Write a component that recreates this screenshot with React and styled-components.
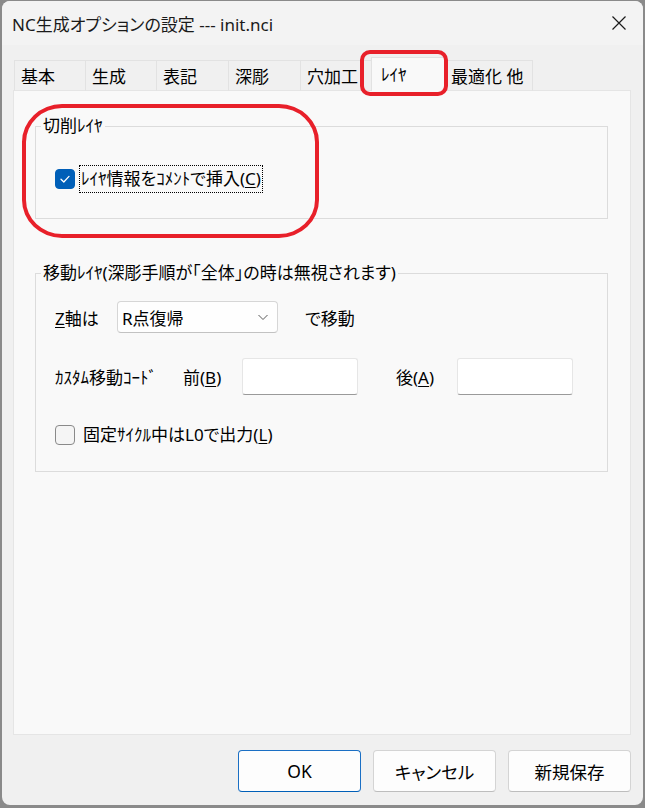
import React from 'react';
import styled, { createGlobalStyle } from 'styled-components';

const GlobalStyle = createGlobalStyle`
  html, body {
    margin: 0;
    padding: 0;
  }
  body {
    background: #8a8a8a;
    font-family: "Noto Sans", "Noto Sans CJK JP", sans-serif;
    font-feature-settings: "palt";
    font-size: 17px;
    color: #000;
  }
`;

const Window = styled.div`
  position: relative;
  box-sizing: border-box;
  margin: 1px 2px 0 2px;
  width: 641px;
  height: 804px;
  border-radius: 8px;
  background: #f0f0f0;
  overflow: hidden;
  display: flex;
  flex-direction: column;
`;

const TitleBar = styled.div`
  height: 44px;
  flex: none;
  display: flex;
  align-items: center;
  justify-content: space-between;
  padding-left: 10px;
  background: #f3f3f3;
`;

const Title = styled.div`
  font-size: 17px;
  color: #1a1a1a;
`;

const CloseButton = styled.div`
  width: 48px;
  height: 44px;
  display: flex;
  align-items: center;
  justify-content: center;
`;

const Body = styled.div`
  flex: 1;
  display: flex;
  flex-direction: column;
  padding: 12px 12px 0 11px;
  min-height: 0;
`;

const TabRow = styled.div`
  position: relative;
  z-index: 1;
  height: 34px;
  margin-bottom: -1px;
  padding-left: 1px;
  display: flex;
  align-items: flex-end;
`;

const Tab = styled.div`
  box-sizing: border-box;
  flex: none;
  width: ${p => (p.$active ? p.$w + 4 : p.$w)}px;
  height: ${p => (p.$active ? 34 : 31)}px;
  margin: ${p => (p.$active ? '0 -2px' : '0')};
  padding: ${p => (p.$active ? '0 0 3px 9px' : '0 0 1px 6px')};
  position: relative;
  z-index: ${p => (p.$active ? 2 : 1)};
  display: flex;
  align-items: center;
  white-space: nowrap;
  overflow: hidden;
  background: ${p => (p.$active ? '#f9f9f9' : '#f0f0f0')};
  border-top: 1px solid #e2e2e2;
  border-right: 1px solid #e2e2e2;
  border-left: ${p => (p.$first || p.$active ? '1px solid #e2e2e2' : 'none')};
  border-bottom: ${p => (p.$active ? 'none' : '1px solid #e5e5e5')};
`;

const Panel = styled.div`
  flex: 1;
  background: #f9f9f9;
  border: 1px solid #e5e5e5;
  padding: 24px 22px 0 21px;
`;

const Group = styled.fieldset`
  margin: ${p => (p.$first ? 0 : '43px 0 0')};
  padding: 0;
  min-width: 0;
  border: 1px solid #dcdcdc;
`;

const Legend = styled.legend`
  margin-left: 5px;
  padding: 0 2px;
  line-height: 22px;
`;

const GroupBody = styled.div`
  display: flex;
  flex-direction: column;
  padding: ${p => p.$pad};
`;

const Row = styled.div`
  display: flex;
  align-items: center;
  height: ${p => p.$h}px;
  margin-top: ${p => p.$mt || 0}px;
`;

const Label = styled.span`
  flex: none;
  width: ${p => (p.$w ? `${p.$w}px` : 'auto')};
  margin-left: ${p => p.$ml || 0}px;
  white-space: nowrap;
`;

const Key = styled.span`
  text-decoration: underline;
  text-underline-offset: 2px;
`;

const Box = styled.span`
  box-sizing: border-box;
  flex: none;
  width: 20px;
  height: 20px;
  border-radius: 4px;
  display: flex;
  align-items: center;
  justify-content: center;
  background: ${p => (p.$checked ? '#005fb8' : '#f5f5f5')};
  border: 1px solid ${p => (p.$checked ? '#005fb8' : '#8a8a8a')};
`;

const CheckText = styled.span`
  margin-left: ${p => (p.$focus ? 4 : 6)}px;
  padding: 2px 1px;
  border: 1px dotted ${p => (p.$focus ? '#000' : 'transparent')};
  white-space: nowrap;
  line-height: 22px;
`;

const Select = styled.div`
  box-sizing: border-box;
  flex: none;
  width: 161px;
  height: 32px;
  display: flex;
  align-items: center;
  justify-content: space-between;
  padding: 0 8px 0 4px;
  background: #fefefe;
  border: 1px solid #d6d6d6;
  border-bottom-color: #c2c2c2;
  border-radius: 4px;
`;

const TextBox = styled.div`
  box-sizing: border-box;
  flex: none;
  width: 116px;
  height: 37px;
  background: #fff;
  border: 1px solid #e6e6e6;
  border-bottom-color: #9a9a9a;
  border-radius: 3px;
`;

const Footer = styled.div`
  flex: none;
  height: 70px;
  box-sizing: border-box;
  padding: 15px 12px 0 0;
  display: flex;
  justify-content: flex-end;
  gap: 12px;
`;

const Button = styled.div`
  box-sizing: border-box;
  width: 123px;
  height: 42px;
  display: flex;
  align-items: center;
  justify-content: center;
  font-size: 17.5px;
  background: #fdfdfd;
  border: 1px solid ${p => (p.$default ? '#1a6fc4' : '#d4d4d4')};
  border-bottom-color: ${p => (p.$default ? '#005fb8' : '#bdbdbd')};
  border-radius: 4px;
`;

const Mark = styled.div`
  position: absolute;
  box-sizing: border-box;
  left: ${p => p.$x}px;
  top: ${p => p.$y}px;
  width: ${p => p.$w}px;
  height: ${p => p.$h}px;
  border: 4px solid #e8202a;
  border-radius: ${p => p.$r};
  pointer-events: none;
  z-index: 5;
`;

const tabs = [
  { label: '基本', w: 72 },
  { label: '生成', w: 71 },
  { label: '表記', w: 72 },
  { label: '深彫', w: 72 },
  { label: '穴加工', w: 72 },
  { label: 'ﾚｲﾔ', w: 72, active: true },
  { label: '最適化 他', w: 88 },
];

const Check = () => (
  <svg width="12" height="12" viewBox="0 0 12 12">
    <path d="M2 6.2 L4.8 9 L10 3.4" fill="none" stroke="#fff" strokeWidth="1.3" strokeLinecap="round" strokeLinejoin="round" />
  </svg>
);

const Chevron = () => (
  <svg width="12" height="12" viewBox="0 0 12 12">
    <path d="M1.5 4 L6 8.5 L10.5 4" fill="none" stroke="#5a5a5a" strokeWidth="1" />
  </svg>
);

const CloseIcon = () => (
  <svg width="16" height="16" viewBox="0 0 16 16">
    <path d="M1.5 1.5 L14.5 14.5 M14.5 1.5 L1.5 14.5" stroke="#1a1a1a" strokeWidth="1.2" />
  </svg>
);

export default function App() {
  return (
    <>
      <GlobalStyle />
      <Window>
        <TitleBar>
          <Title>NC生成オプションの設定 --- init.nci</Title>
          <CloseButton><CloseIcon /></CloseButton>
        </TitleBar>
        <Body>
          <TabRow>
            {tabs.map((t, i) => (
              <Tab key={t.label} $w={t.w} $active={t.active} $first={i === 0}>{t.label}</Tab>
            ))}
          </TabRow>
          <Panel>
            <Group $first>
              <Legend>切削ﾚｲﾔ</Legend>
              <GroupBody $pad="28px 0 25px 19px">
                <Row $h={28}>
                  <Box $checked><Check /></Box>
                  <CheckText $focus>ﾚｲﾔ情報をｺﾒﾝﾄで挿入(<Key>C</Key>)</CheckText>
                </Row>
              </GroupBody>
            </Group>
            <Group>
              <Legend>移動ﾚｲﾔ(深彫手順が｢全体｣の時は無視されます)</Legend>
              <GroupBody $pad="17px 0 24px 19px">
                <Row $h={32}>
                  <Label $w={62}><Key>Z</Key>軸は</Label>
                  <Select>
                    <span>R点復帰</span>
                    <Chevron />
                  </Select>
                  <Label $ml={27}>で移動</Label>
                </Row>
                <Row $h={37} $mt={25}>
                  <Label $w={128}>ｶｽﾀﾑ移動ｺｰﾄﾞ</Label>
                  <Label $w={59}>前(<Key>B</Key>)</Label>
                  <TextBox />
                  <Label $w={61} $ml={38}>後(<Key>A</Key>)</Label>
                  <TextBox />
                </Row>
                <Row $h={24} $mt={28}>
                  <Box />
                  <CheckText>固定ｻｲｸﾙ中はL0で出力(<Key>L</Key>)</CheckText>
                </Row>
              </GroupBody>
            </Group>
          </Panel>
        </Body>
        <Footer>
          <Button $default>OK</Button>
          <Button>キャンセル</Button>
          <Button>新規保存</Button>
        </Footer>
        <Mark $x={358} $y={49} $w={88} $h={46} $r="10px" />
        <Mark $x={20} $y={103} $w={297} $h={134} $r="40px / 38px" />
      </Window>
    </>
  );
}
